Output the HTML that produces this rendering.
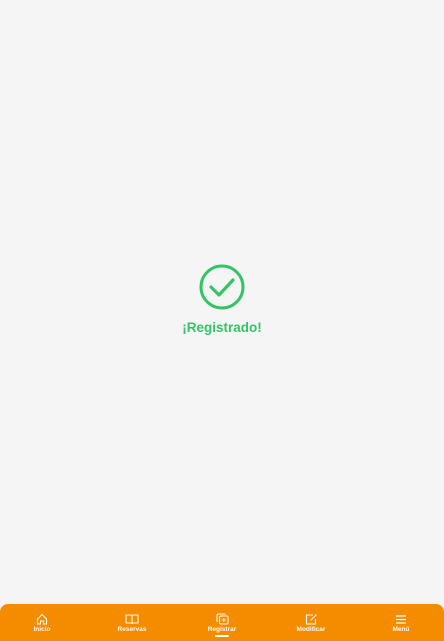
<!DOCTYPE html>
<html><head><meta charset="utf-8"><style>
html,body{margin:0;padding:0;width:444px;height:641px;background:#f5f5f5;overflow:hidden;font-family:"Liberation Sans",sans-serif;position:relative}
.chk{position:absolute;left:198px;top:264px}
.t{position:absolute;left:0;width:444px;top:320px;text-align:center;color:#34c466;font-weight:bold;font-size:13.5px}
.bar{position:absolute;left:0;top:604px;width:444px;height:37px;background:#f58c00;border-radius:8px 8px 0 0}
.it{position:absolute;top:9px;width:60px;margin-left:-30px;text-align:center;color:#fff;font-size:6.5px;font-weight:bold;opacity:.95}
.it svg{display:block;margin:0 auto 1px}
.ul{position:absolute;left:215px;top:31px;width:14px;height:2px;background:#fff;border-radius:1px}
</style></head><body>
<svg class="chk" width="48" height="46" viewBox="0 0 48 46"><circle cx="24" cy="23" r="21" fill="none" stroke="#34c466" stroke-width="3"/><path d="M13 23 L21 31 L35 16" fill="none" stroke="#34c466" stroke-width="3.2" stroke-linecap="round" stroke-linejoin="round"/></svg>
<div class="t">¡Registrado!</div>
<div class="bar">
<div class="it" style="left:42px"><svg width="12" height="12" viewBox="0 0 12 12" fill="none" stroke="#fff" stroke-width="1.1"><path d="M1.5 6 L6 1.5 L10.5 6 V11 H7.5 V8 H4.5 V11 H1.5 Z"/></svg>Inicio</div>
<div class="it" style="left:132px"><svg width="14" height="12" viewBox="0 0 14 12" fill="none" stroke="#fff" stroke-width="1.1"><path d="M1 2 H5.5 Q7 2 7 3.5 V11 Q7 10 5.5 10 H1 Z M13 2 H8.5 Q7 2 7 3.5 V11 Q7 10 8.5 10 H13 Z"/></svg>Reservas</div>
<div class="it" style="left:222px"><svg width="13" height="12" viewBox="0 0 13 12" fill="none" stroke="#fff" stroke-width="1.1"><rect x="3.5" y="3" width="8.5" height="8" rx="1.5"/><path d="M1 9 V2.5 Q1 1 2.5 1 H9.5"/><path d="M7.75 5 V9 M5.75 7 H9.75"/></svg>Registrar</div>
<div class="it" style="left:311px"><svg width="13" height="12" viewBox="0 0 13 12" fill="none" stroke="#fff" stroke-width="1.1"><path d="M8 2 H1.5 V11 H10.5 V6"/><path d="M5.5 7.5 L11.5 1.5"/></svg>Modificar</div>
<div class="it" style="left:401px"><svg width="12" height="12" viewBox="0 0 12 12" fill="none" stroke="#fff" stroke-width="1.2"><path d="M1 3 H11 M1 6.5 H11 M1 10 H11"/></svg>Menú</div>
<div class="ul"></div>
</div>
</body></html>
